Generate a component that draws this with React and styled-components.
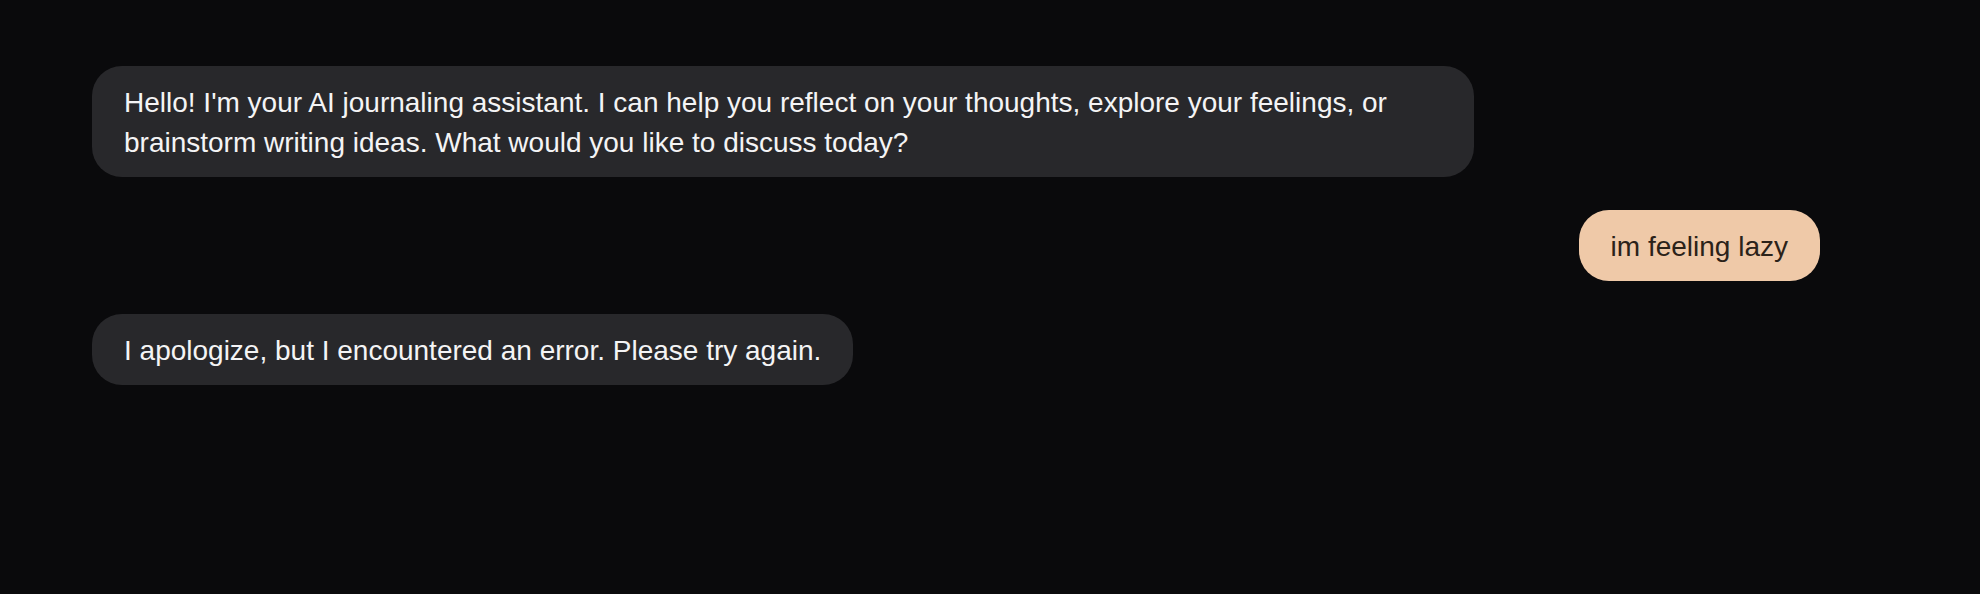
import React from "react";
import styled, { createGlobalStyle } from "styled-components";

const Global = createGlobalStyle`
  html, body { margin: 0; padding: 0; background: #0a0a0c; }
  body { font-family: "Liberation Sans", Arial, sans-serif; }
`;

const Page = styled.div`
  min-height: 594px;
  background: #0a0a0c;
  box-sizing: border-box;
  padding: 66px 160px 40px 92px;
  display: flex;
  flex-direction: column;
  gap: 32.5px;
`;

const Row = styled.div`
  display: flex;
  justify-content: ${(p) => (p.$user ? "flex-end" : "flex-start")};
`;

const Bubble = styled.div`
  max-width: 80%;
  box-sizing: border-box;
  padding: 17px 32px 15px;
  border-radius: 30px;
  font-size: 28px;
  line-height: 39.5px;
  background: ${(p) => (p.$user ? "#efc9a8" : "#28282b")};
  color: ${(p) => (p.$user ? "#2b2219" : "#f4f4f5")};
`;

const messages = [
  {
    user: false,
    text: "Hello! I'm your AI journaling assistant. I can help you reflect on your thoughts, explore your feelings, or brainstorm writing ideas. What would you like to discuss today?",
  },
  { user: true, text: "im feeling lazy" },
  { user: false, text: "I apologize, but I encountered an error. Please try again." },
];

export default function App() {
  return (
    <>
      <Global />
      <Page>
        {messages.map((m, i) => (
          <Row key={i} $user={m.user}>
            <Bubble $user={m.user}>{m.text}</Bubble>
          </Row>
        ))}
      </Page>
    </>
  );
}
